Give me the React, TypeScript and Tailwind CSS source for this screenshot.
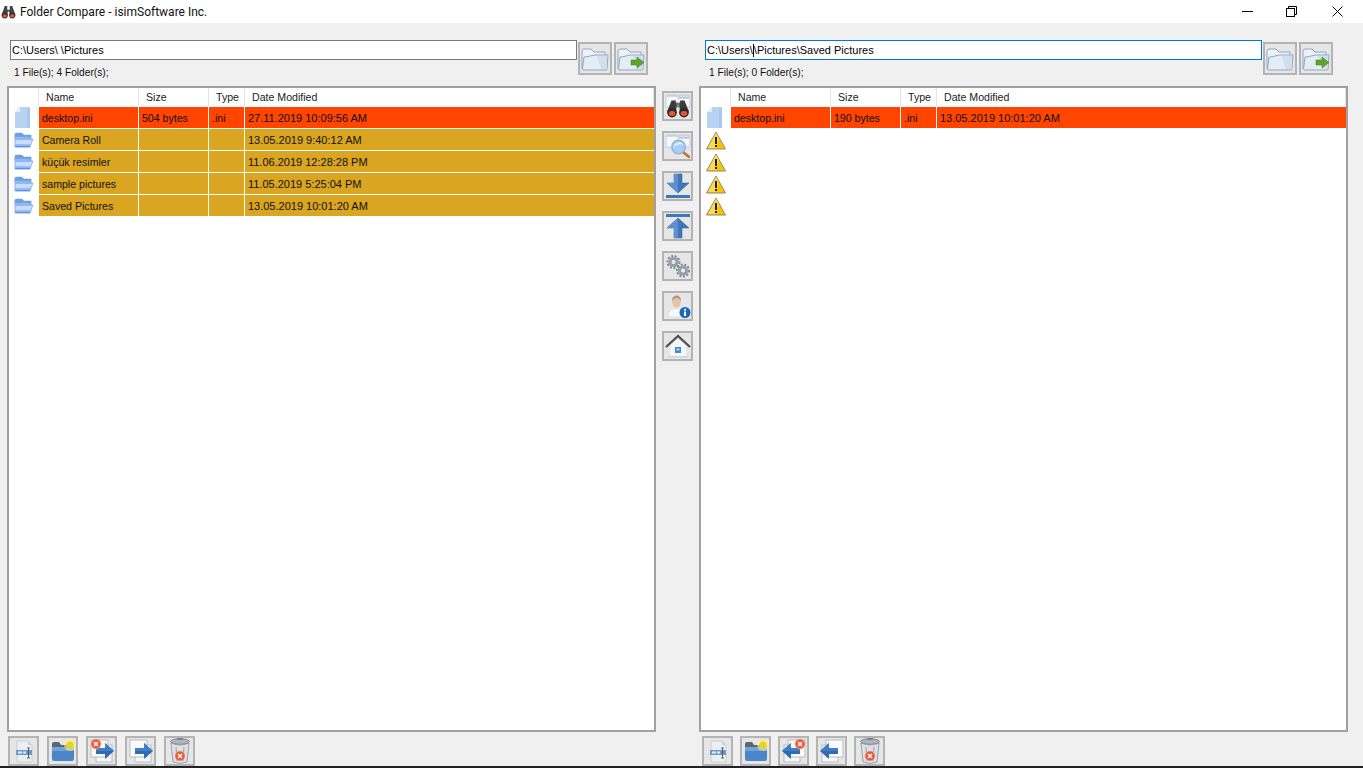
import React from 'react';

const FONT = "font-['Liberation_Sans',Arial,sans-serif]";

type RowData = { name: string; size?: string; type?: string; date: string; kind: 'file' | 'folder' };

const LEFT_ROWS: RowData[] = [
  { name: 'desktop.ini', size: '504 bytes', type: '.ini', date: '27.11.2019 10:09:56 AM', kind: 'file' },
  { name: 'Camera Roll', date: '13.05.2019 9:40:12 AM', kind: 'folder' },
  { name: 'küçük resimler', date: '11.06.2019 12:28:28 PM', kind: 'folder' },
  { name: 'sample pictures', date: '11.05.2019 5:25:04 PM', kind: 'folder' },
  { name: 'Saved Pictures', date: '13.05.2019 10:01:20 AM', kind: 'folder' },
];

const RIGHT_ROWS: RowData[] = [
  { name: 'desktop.ini', size: '190 bytes', type: '.ini', date: '13.05.2019 10:01:20 AM', kind: 'file' },
];

const FileIcon = () => (
  <svg width="18" height="22" viewBox="0 0 18 22">
    <path d="M1 5 L6 0 H16 V21 H1 Z" fill="#b7d3f2" />
    <path d="M1 5 L6 0 V5 Z" fill="#e3effb" />
    <path d="M16 0 V21 H13 V3 Z" fill="#a9c9ec" />
  </svg>
);

const RowFolderIcon = () => (
  <svg width="20" height="16" viewBox="0.5 0.5 19 15">
    <path d="M1 3 Q1 1 3 1 H8 L10 3 H17 V6 H1 Z" fill="#6f9fdc" />
    <path d="M1 5 H14 L19 7 L16 15 H2 Q1 15 1 14 Z" fill="#8db8f3" />
    <path d="M2 8 H18 L16 12 H2 Z" fill="#c9dcfc" />
    <path d="M1 14 H16 L15.5 15 H2 Z" fill="#4f86d4" />
  </svg>
);

const Warning = () => (
  <svg width="20" height="19" viewBox="0 0 20 19">
    <path d="M10 1 L19.5 18 H0.5 Z" fill="#f8c400" stroke="#8f8a78" strokeWidth="1" strokeLinejoin="round" />
    <path d="M10 1.5 L13 7 L10 17 H2 Z" fill="#fde36f" opacity="0.7" />
    <rect x="9" y="6" width="2" height="7" fill="#222" />
    <rect x="9" y="14" width="2" height="2" fill="#222" />
  </svg>
);

const BigOpenFolder = ({ arrow }: { arrow?: boolean }) => (
  <svg width="28" height="24" viewBox="0 0 28 24">
    <path d="M1 22 V4 Q1 2 3 2 H10 L13 5 H24 V9" fill="#eef2f7" stroke="#8ea8c4" strokeWidth="1" />
    <path d="M1.5 22 L3 10 Q6 10 9 9 Q12 8 15 8 H27 L26 22 Q26 23 25 23 H3 Q1.5 23 1.5 22 Z" fill="#e4ecf4" stroke="#8ea8c4" strokeWidth="1" />
    <path d="M16 9 H26 L25.4 22 H20 Z" fill="#d2deeb" />
    {arrow && <path d="M14 13 H20 V10 L27 15.5 L20 21 V18 H14 Z" fill="#5fa52c" stroke="#3f7a1a" strokeWidth="0.5" />}
  </svg>
);

const Paper = () => (
  <g>
    <path d="M2 2 H11 V4 H2 Z" fill="#dde5ef" stroke="#a9b9cc" strokeWidth="0.6" />
    <path d="M13 2 H22 V4 H13 Z" fill="#dde5ef" stroke="#a9b9cc" strokeWidth="0.6" />
    <path d="M1 3 H11 L12 5 H23 V13 H1 Z" fill="#f5f7fb" stroke="#b4c2d4" strokeWidth="0.6" />
  </g>
);

const Binoculars = () => (
  <svg width="26" height="26" viewBox="0 0 24 24">
    <Paper />
    <path d="M6 7 H10 V9 H14 V7 H18 L22 17 H14 L13 12 H11 L10 17 H2 Z" fill="#3c3c3c" />
    <rect x="10.5" y="9" width="3" height="4" fill="#777" />
    <circle cx="6.5" cy="18" r="4.5" fill="#2b2b2b" />
    <circle cx="17.5" cy="18" r="4.5" fill="#2b2b2b" />
    <ellipse cx="6.5" cy="19" rx="3" ry="2.3" fill="#e8572e" />
    <ellipse cx="17.5" cy="19" rx="3" ry="2.3" fill="#e8572e" />
  </svg>
);

const Magnifier = () => (
  <svg width="26" height="26" viewBox="0 0 24 24">
    <Paper />
    <path d="M16 17 L22 22" stroke="#b8792a" strokeWidth="2.4" strokeLinecap="round" />
    <circle cx="12.5" cy="13" r="6.3" fill="#a9cdf3" stroke="#8fb0d6" strokeWidth="1.2" />
    <path d="M8 13 A5 5 0 0 1 17 11 Q12 9 8 13 Z" fill="#e6f2fd" />
  </svg>
);

const ArrowDown = () => (
  <svg width="26" height="26" viewBox="0 0 26 26">
    <path d="M9 1 H17 V10 H24 L13 20 L2 10 H9 Z" fill="#3f77bb" stroke="#2d5f9f" strokeWidth="0.5" />
    <path d="M9 1 H13 V20 L2 10 H9 Z" fill="#5b8fd0" />
    <rect x="1" y="22" width="24" height="3" fill="#3f77bb" />
  </svg>
);

const ArrowUp = () => (
  <svg width="26" height="26" viewBox="0 0 26 26">
    <rect x="1" y="1" width="24" height="3" fill="#3f77bb" />
    <path d="M13 5 L24 15 H17 V25 H9 V15 H2 Z" fill="#3f77bb" stroke="#2d5f9f" strokeWidth="0.5" />
    <path d="M13 5 V25 H9 V15 H2 Z" fill="#5b8fd0" />
  </svg>
);

const Gear = ({ cx, cy, r }: { cx: number; cy: number; r: number }) => (
  <g>
    <circle cx={cx} cy={cy} r={r} fill="none" stroke="#7e8794" strokeWidth="2" strokeDasharray="2 1.6" />
    <circle cx={cx} cy={cy} r={r - 0.8} fill="#9aa3af" />
    <circle cx={cx} cy={cy} r={r / 2.2} fill="#e5e9ee" stroke="#6d7682" strokeWidth="0.7" />
  </g>
);

const Gears = () => (
  <svg width="26" height="26" viewBox="0 0 26 26">
    <Gear cx={8.5} cy={9} r={6} />
    <Gear cx={18} cy={17.5} r={6} />
  </svg>
);

const UserInfo = () => (
  <svg width="26" height="26" viewBox="0 0 26 26">
    <path d="M3 24 Q3 16 11 15.5 Q20 16 20 24 Z" fill="#f6f8fb" stroke="#d5dbe3" strokeWidth="0.6" />
    <ellipse cx="11.5" cy="9" rx="4.3" ry="5.6" fill="#e6c4a5" />
    <path d="M7 8 Q7 2.5 11.5 2.5 Q16 2.5 16 8 Q14 5 11.5 5 Q9 5 7 8 Z" fill="#ad9b84" />
    <circle cx="20" cy="19.5" r="5.5" fill="#1f66b5" />
    <rect x="19" y="18.5" width="2" height="4.5" fill="#fff" />
    <rect x="19" y="15.8" width="2" height="1.8" fill="#fff" />
  </svg>
);

const House = () => (
  <svg width="26" height="26" viewBox="0 0 26 26">
    <path d="M5 13 L13 6 L21 13 V24 H5 Z" fill="#f7f8fa" />
    <path d="M1 14 L13 3 L25 14" fill="none" stroke="#4b4f55" strokeWidth="2.2" />
    <rect x="10" y="14" width="6" height="6" fill="#3f86d6" />
    <rect x="11.5" y="15.5" width="3" height="2" fill="#bcd8f5" />
    <rect x="3" y="23" width="20" height="1.5" fill="#cfd3d8" />
  </svg>
);

const Rename = () => (
  <svg width="26" height="26" viewBox="0 0 26 26">
    <path d="M6 3 H17 L21 7 V24 H6 Z" fill="#eceef2" stroke="#c4c8ce" strokeWidth="0.8" />
    <path d="M17 3 V7 H21 Z" fill="#cdd1d7" />
    <rect x="5" y="12" width="16" height="5" fill="#6a9ace" />
    <rect x="7" y="13.5" width="4" height="2" fill="#e6eff8" />
    <rect x="12" y="13.5" width="3" height="2" fill="#e6eff8" />
    <path d="M17.5 10 V20 M16 10 H19 M16 20 H19" stroke="#444" strokeWidth="0.8" fill="none" />
  </svg>
);

const NewFolder = () => (
  <svg width="26" height="26" viewBox="0 0 26 26">
    <path d="M2 6 Q2 4 4 4 H9 L11 7 H20 V10 H2 Z" fill="#5e6670" />
    <path d="M2 9 H22 Q24 9 24 11 V21 Q24 23 22 23 H4 Q2 23 2 21 Z" fill="#4a86c8" />
    <path d="M2 9 H24 V13 H2 Z" fill="#6ea3dd" />
    <circle cx="20" cy="7" r="6" fill="#fff27a" opacity="0.6" />
    <circle cx="20" cy="7" r="3.6" fill="#e9d22a" />
  </svg>
);

const XBadge = ({ cx, cy }: { cx: number; cy: number }) => (
  <g>
    <circle cx={cx} cy={cy} r="5" fill="#e8593a" stroke="#f5b9a8" strokeWidth="0.6" />
    <path d={`M${cx - 2} ${cy - 2} L${cx + 2} ${cy + 2} M${cx + 2} ${cy - 2} L${cx - 2} ${cy + 2}`} stroke="#fff" strokeWidth="1.4" />
  </g>
);

const CopyArrow = ({ dir, del }: { dir: 'right' | 'left'; del?: boolean }) => (
  <svg width="26" height="26" viewBox="0 0 26 26">
    <g transform={dir === 'left' ? 'matrix(-1 0 0 1 26 0)' : undefined}>
      <rect x="7" y="7" width="16" height="17" fill="#f4f6f9" stroke="#b4b8be" strokeWidth="0.9" />
      <rect x="2" y="2" width="17" height="17" fill="#fafbfc" stroke="#b4b8be" strokeWidth="0.9" />
      <path d="M7 10 H16 V5 L25 13 L16 21 V16 H7 Z" fill="#2f6bb0" />
      <path d="M7 10 H16 V5 L25 13 H7 Z" fill="#3f7fc6" />
    </g>
    {del && (dir === 'right' ? <XBadge cx={7} cy={6} /> : <XBadge cx={19} cy={6} />)}
  </svg>
);

const Trash = () => (
  <svg width="24" height="28" viewBox="0 0 24 28">
    <ellipse cx="12" cy="4.5" rx="9.5" ry="2.8" fill="#aeb5bd" stroke="#6d747c" strokeWidth="0.8" />
    <rect x="9" y="1" width="6" height="2" fill="#7d848c" />
    <path d="M3 6 L5 25 Q12 28 19 25 L21 6 Q12 10 3 6 Z" fill="#dce1e7" stroke="#8a9199" strokeWidth="0.8" />
    <path d="M8 10 L9 24 M16 10 L15 24" stroke="#9aa1a9" strokeWidth="1" />
    <XBadge cx={12} cy={19} />
  </svg>
);

const ToolButton = ({ children, w = 'w-[31px]', h = 'h-[30px]' }: { children: React.ReactNode; w?: string; h?: string }) => (
  <div className={`${w} ${h} shrink-0 flex items-center justify-center bg-[#e6e6e6] border-2 border-[#b4b4b4] overflow-hidden`}>
    {children}
  </div>
);

const PathBar = ({ path, status, focused, width, inset }: { path: React.ReactNode; status: string; focused?: boolean; width: string; inset: string }) => (
  <div className={`h-[63px] flex ${inset}`}>
    <div className={`${width} shrink-0`}>
      <div className={`mt-[17px] h-[20px] bg-white border px-[1px] flex items-center text-[11px] text-black whitespace-pre ${focused ? 'border-[#0078d7]' : 'border-[#7a7a7a]'}`}>
        {path}
      </div>
      <p className="mt-[6px] ml-[4px] text-[10.2px] leading-[13px] text-[#111]">{status}</p>
    </div>
    <div className="mt-[19px] ml-px flex gap-[2px]">
      <ToolButton w="w-[34px]" h="h-[33px]"><BigOpenFolder /></ToolButton>
      <ToolButton w="w-[34px]" h="h-[33px]"><BigOpenFolder arrow /></ToolButton>
    </div>
  </div>
);

const Cell = ({ className, children }: { className: string; children?: React.ReactNode }) => (
  <div className={`${className} shrink-0 truncate pl-[3px] leading-[22px]`}>{children}</div>
);

const Sep = () => <div className="w-px shrink-0 bg-white" />;

const FileTable = ({ rows, warnings = 0 }: { rows: RowData[]; warnings?: number }) => (
  <div className="h-[646px] w-[649px] bg-white border-2 border-[#a0a0a0] text-[10.6px] text-[#111]">
    <div className="flex h-[19px] leading-[19px] text-[#222]">
      <div className="w-[30px] border-r border-[#e5e5e5]" />
      <div className="w-[100px] pl-[7px] border-r border-[#e5e5e5]">Name</div>
      <div className="w-[70px] pl-[7px] border-r border-[#e5e5e5]">Size</div>
      <div className="w-[36px] pl-[7px] border-r border-[#e5e5e5]">Type</div>
      <div className="flex-1 pl-[7px] border-r border-[#e5e5e5]">Date Modified</div>
    </div>
    <div className="flex flex-col gap-px">
      {rows.map((row) => (
        <div key={row.name} className="flex h-[21px]">
          {row.kind === 'file' ? (
            <div className="w-[30px] pr-px flex items-center justify-center"><FileIcon /></div>
          ) : (
            <div className="w-[30px] flex items-center justify-center"><RowFolderIcon /></div>
          )}
          <div className={`flex w-[616px] ${row.kind === 'file' ? 'bg-[#ff4500]' : 'bg-[#daa520]'}`}>
            <Cell className="w-[99px]">{row.name}</Cell>
            <Sep />
            <Cell className="w-[69px]">{row.size}</Cell>
            <Sep />
            <Cell className="w-[35px]">{row.type}</Cell>
            <Sep />
            <Cell className="flex-1 text-[11px]">{row.date}</Cell>
          </div>
        </div>
      ))}
      {Array.from({ length: warnings }).map((_, i) => (
        <div key={i} className="flex h-[21px]">
          <div className="w-[30px] pr-px pt-[2px] flex items-center justify-center"><Warning /></div>
        </div>
      ))}
    </div>
  </div>
);

export default function App() {
  return (
    <div className={`${FONT} w-[1363px] h-[768px] overflow-hidden bg-[#f0f0f0] flex flex-col`}>
      <header className="h-[23px] shrink-0 bg-white flex items-center">
        <svg className="ml-[1px]" width="15" height="15" viewBox="0 0 24 24">
          <path d="M6 3 H10 V9 H14 V3 H18 L23 17 H14 L13 12 H11 L10 17 H1 Z" fill="#444" />
          <circle cx="6" cy="18" r="5" fill="#333" />
          <circle cx="18" cy="18" r="5" fill="#333" />
          <ellipse cx="6" cy="19" rx="3.4" ry="2.6" fill="#e8572e" />
          <ellipse cx="18" cy="19" rx="3.4" ry="2.6" fill="#e8572e" />
        </svg>
        <span className="ml-[4px] text-[12px] font-['Roboto',sans-serif] text-[#111]">Folder Compare - isimSoftware Inc.</span>
        <div className="ml-auto flex items-center text-black">
          <svg className="mr-[33px]" width="11" height="11" viewBox="0 0 11 11"><path d="M0 5.5 H11" stroke="#000" /></svg>
          <svg className="mr-[35px]" width="11" height="11" viewBox="0 0 11 11" fill="none" stroke="#000">
            <rect x="0.5" y="2.5" width="8" height="8" />
            <path d="M2.5 2.5 V0.5 H10.5 V8.5 H8.5" />
          </svg>
          <svg className="mr-[20px]" width="11" height="11" viewBox="0 0 11 11" stroke="#000"><path d="M0.5 0.5 L10.5 10.5 M10.5 0.5 L0.5 10.5" /></svg>
        </div>
      </header>

      <main className="flex-1 flex pl-[7px]">
        <section className="w-[649px]">
          <PathBar
            inset="pl-[3px]"
            width="w-[567px]"
            path={<>C:\Users\<span className="ml-[3px]">\Pictures</span></>}
            status="1 File(s); 4 Folder(s);"
          />
          <FileTable rows={LEFT_ROWS} />
          <div className="mt-[4px] ml-px flex gap-[8px]">
            <ToolButton><Rename /></ToolButton>
            <ToolButton><NewFolder /></ToolButton>
            <ToolButton><CopyArrow dir="right" del /></ToolButton>
            <ToolButton><CopyArrow dir="right" /></ToolButton>
            <ToolButton><Trash /></ToolButton>
          </div>
        </section>

        <nav className="w-[43px] pt-[68px] pl-[6px] flex flex-col gap-[10px]">
          <ToolButton><Binoculars /></ToolButton>
          <ToolButton><Magnifier /></ToolButton>
          <ToolButton><ArrowDown /></ToolButton>
          <ToolButton><ArrowUp /></ToolButton>
          <ToolButton><Gears /></ToolButton>
          <ToolButton><UserInfo /></ToolButton>
          <ToolButton><House /></ToolButton>
        </nav>

        <section className="w-[649px]">
          <PathBar
            inset="pl-[6px]"
            width="w-[557px]"
            focused
            path={<>C:\Users\<span className="inline-block w-px h-[13px] bg-black align-middle" />\Pictures\Saved Pictures</>}
            status="1 File(s); 0 Folder(s);"
          />
          <FileTable rows={RIGHT_ROWS} warnings={4} />
          <div className="mt-[4px] ml-[3px] flex gap-[7px]">
            <ToolButton><Rename /></ToolButton>
            <ToolButton><NewFolder /></ToolButton>
            <ToolButton><CopyArrow dir="left" del /></ToolButton>
            <ToolButton><CopyArrow dir="left" /></ToolButton>
            <ToolButton><Trash /></ToolButton>
          </div>
        </section>
      </main>

      <div className="h-[2px] shrink-0 bg-[#222]" />
    </div>
  );
}
